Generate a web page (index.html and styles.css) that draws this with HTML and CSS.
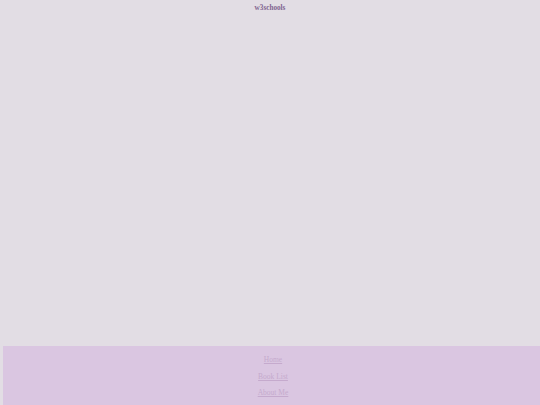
FILE: index.html
```html
<!DOCTYPE html>
<html>
<head>
<meta charset="utf-8">
<link rel="stylesheet" href="styles.css">
</head>
<body>
<div class="page">
  <header class="top"><span class="brand">w3schools</span></header>
  <main class="content"></main>
  <footer class="foot">
    <nav class="links">
      <a href="#">Home</a>
      <a href="#">Book List</a>
      <a href="#">About Me</a>
    </nav>
  </footer>
</div>
</body>
</html>
```
FILE: styles.css
```css
html, body {
  margin: 0;
  padding: 0;
  width: 540px;
  height: 405px;
  overflow: hidden;
  background: #e2dde4;
  font-family: "Liberation Serif", "Times New Roman", serif;
}
.page {
  display: flex;
  flex-direction: column;
  height: 405px;
}
.top {
  text-align: center;
  padding-top: 1px;
  height: 11px;
  line-height: 8px;
}
.brand {
  font-size: 7.2px;
  font-weight: bold;
  color: #7f6490;
}
.content {
  flex: 1;
}
.foot {
  margin-left: 3px;
  width: 540px;
  height: 59px;
  background: #dac6e1;
}
.links {
  display: flex;
  flex-direction: column;
  align-items: center;
  padding-top: 10px;
  gap: 8px;
}
.links a {
  font-size: 7.5px;
  line-height: 8.7px;
  color: #c5aacd;
  text-decoration: underline;
}
```
